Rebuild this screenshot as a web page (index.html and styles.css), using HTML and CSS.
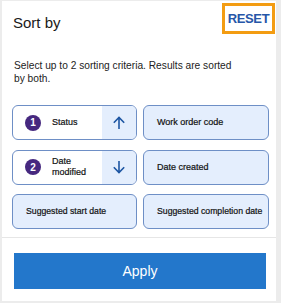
FILE: index.html
```html
<!DOCTYPE html>
<html>
<head>
<meta charset="utf-8">
<link rel="stylesheet" href="styles.css">
</head>
<body>
<div class="card">
  <div class="header">
    <div class="title">Sort by</div>
    <button class="reset">RESET</button>
  </div>
  <p class="desc">Select up to 2 sorting criteria. Results are sorted by both.</p>
  <div class="grid">
    <div class="chip selected">
      <span class="num">1</span>
      <span class="label">Status</span>
      <span class="dir">
        <svg width="14" height="14" viewBox="0 0 14 14"><path d="M7 13V1.5M1.8 6.7L7 1.5l5.2 5.2" fill="none" stroke="#1d56a3" stroke-width="1.6"/></svg>
      </span>
    </div>
    <div class="chip"><span class="label">Work order code</span></div>
    <div class="chip selected">
      <span class="num">2</span>
      <span class="label">Date<br>modified</span>
      <span class="dir">
        <svg width="14" height="14" viewBox="0 0 14 14"><path d="M7 1v11.5M1.8 7.3L7 12.5l5.2-5.2" fill="none" stroke="#1d56a3" stroke-width="1.6"/></svg>
      </span>
    </div>
    <div class="chip"><span class="label">Date created</span></div>
    <div class="chip small"><span class="label">Suggested start date</span></div>
    <div class="chip small"><span class="label">Suggested completion date</span></div>
  </div>
  <div class="footer">
    <button class="apply">Apply</button>
  </div>
</div>
</body>
</html>
```
FILE: styles.css
```css
* { box-sizing: border-box; }
html, body { margin: 0; padding: 0; }
body {
  background: #ececec;
  width: 281px;
  height: 303px;
  padding: 1px 5px 2px 2px;
  font-family: "Liberation Sans", Arial, sans-serif;
  overflow: hidden;
}
.card {
  background: #fff;
  height: 300px;
  display: flex;
  flex-direction: column;
}
.header {
  display: flex;
  justify-content: space-between;
  align-items: center;
  padding: 2px 1px 0 11px;
  height: 33px;
}
.title {
  font-size: 15px;
  color: #1a1a1a;
  padding-top: 8px;
}
.reset {
  border: 3px solid #f39c12;
  background: #fff;
  color: #2656a8;
  font-family: "Liberation Sans", Arial, sans-serif;
  font-size: 13px;
  font-weight: bold;
  letter-spacing: -0.4px;
  width: 53px;
  height: 31px;
  padding: 0;
  margin: 0;
}
.desc {
  margin: 25px 0 0 12px;
  width: 222px;
  font-size: 10.2px;
  line-height: 13px;
  color: #222;
}
.grid {
  margin: 20px 0 0 10px;
  display: grid;
  grid-template-columns: 125px 126px;
  grid-auto-rows: 35px;
  column-gap: 6px;
  row-gap: 9.5px;
}
.chip {
  border: 1px solid #6e8fc6;
  border-radius: 6px;
  background: #e4eefd;
  display: flex;
  align-items: center;
  padding-left: 13px;
  font-size: 9px;
  color: #111;
  -webkit-text-stroke: 0.2px #111;
  overflow: hidden;
  white-space: nowrap;
}
.chip.small { font-size: 8.7px; padding-left: 13px; }
.chip.selected { background: #fff; padding-left: 12px; }
.label { line-height: 11px; }
.num {
  width: 16px;
  height: 16px;
  border-radius: 50%;
  background: #46287f;
  color: #fff;
  font-size: 10px;
  font-weight: bold;
  -webkit-text-stroke: 0;
  display: flex;
  align-items: center;
  justify-content: center;
  margin-right: 11px;
  flex: none;
}
.selected .label { flex: 1; }
.dir {
  width: 34px;
  align-self: stretch;
  background: #e4eefd;
  display: flex;
  align-items: center;
  justify-content: center;
}
.footer {
  margin-top: 8px;
  border-top: 1px solid #e6e6e6;
  padding: 15px 10px 0 12px;
}
.apply {
  display: block;
  width: 252px;
  height: 36px;
  border: none;
  background: #2377cb;
  color: #fff;
  font-family: "Liberation Sans", Arial, sans-serif;
  font-size: 14px;
  padding: 0;
  margin: 0;
}
```
